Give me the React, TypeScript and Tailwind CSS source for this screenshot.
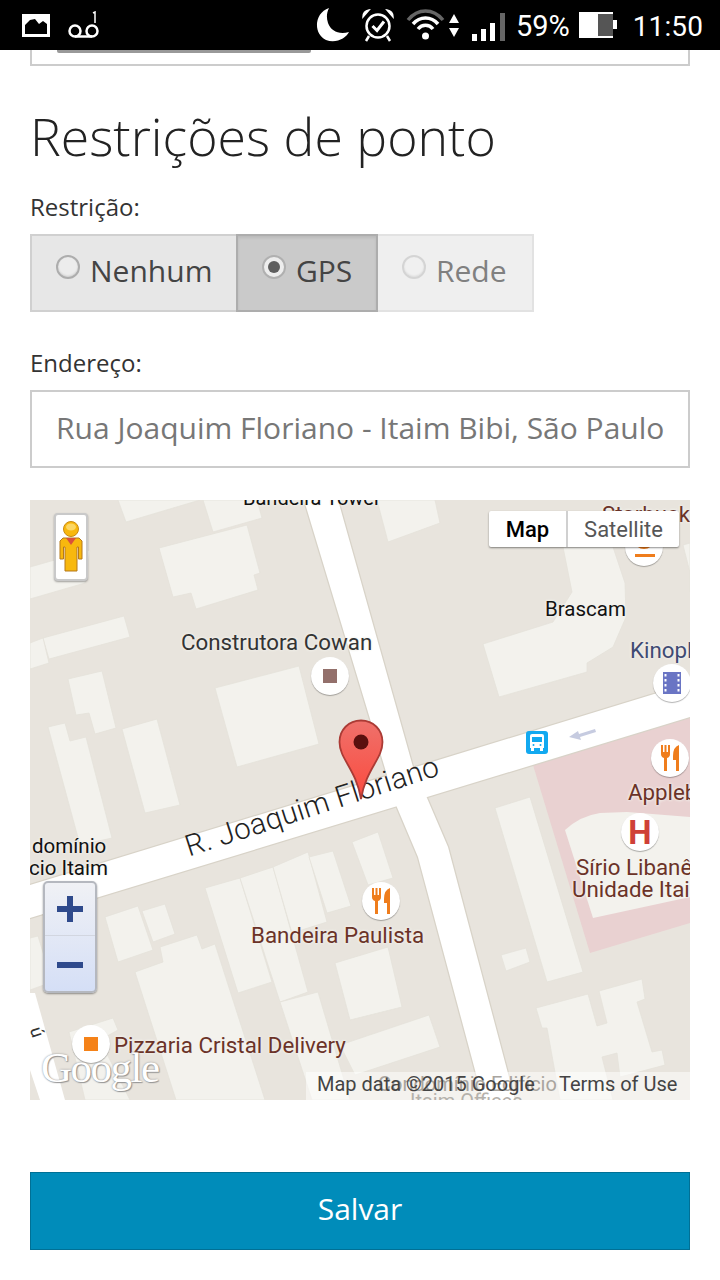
import { ReactNode } from "react";

const buildings: string[] = [
  "88,0 170,0 96,22",
  "173,0 227,0 232,18 183,32",
  "129,48 217,25 230,73 224,75 228,90 166,109 161,93 143,97",
  "0,67 60,50 55,83 0,99",
  "13,138 94,116 100,137 19,159",
  "0,143 13,138 19,163 0,169",
  "38,179 72,171 86,228 65,234 59,213 46,215",
  "18,227 35,223 40,241 56,237 82,338 50,345",
  "92,229 127,219 150,305 115,313",
  "185,188 269,166 289,244 207,267",
  "347,0 405,0 410,23 358,42",
  "453,144 523,122 542,92 533,47 583,47 595,83 596,117 583,147 557,163 557,172 469,197",
  "653,45 660,43 660,92 665,92",
  "75,417 108,406 123,450 88,462",
  "112,411 135,404 145,434 123,442",
  "105,472 133,462 130,447 167,435 172,449 185,444 235,600 146,600",
  "175,388 210,378 242,482 208,493",
  "210,378 243,367 278,492 250,502",
  "243,367 278,352 297,422 262,433",
  "279,357 303,351 321,406 297,413",
  "250,502 288,492 320,600 282,600",
  "39,532 83,518 88,530 70,540 100,600 55,600",
  "305,463 358,447 372,507 320,520",
  "322,342 348,332 363,378 338,385",
  "310,545 399,515 410,547 325,575",
  "465,308 500,297 553,472 517,482",
  "471,455 496,448 500,462 476,471",
  "506,508 558,494 567,526 577,523 569,491 612,479 615,499 607,502 622,552 632,550 635,565 590,577 587,553 572,557 583,600 530,600 517,528 512,528",
  "0,438 8,436 22,482 0,490",
];

const crossRoad = "M274,0 L308,0 L383,267 L397,298 L418,347 L485,600 L453,600 L388,357 L366,305 Z";
const mainRoad = "M0,385 L660,183 L660,217 L0,418 Z";

const MapBase = (): ReactNode => (
  <svg className="absolute inset-0" width="660" height="600" viewBox="0 0 660 600">
    <rect width="660" height="600" fill="#e8e4dd" />
    <polygon points="503,265 660,217 660,423 560,453" fill="#e9d1d1" />
    <path d="M535,330 Q550,316 570,313 L597,312 L660,317 L660,397 L563,418 Z" fill="#f3f2ed" />
    {buildings.map((p, i) => (
      <polygon key={i} points={p} fill="#f3f2ed" stroke="#e4e1d9" strokeWidth="0.75" />
    ))}
    {/* roads, casing first and then the fill so the junction stays clean */}
    <path d={crossRoad} fill="#d8d3c8" stroke="#d8d3c8" strokeWidth="2.5" />
    <path d={mainRoad} fill="#d8d3c8" stroke="#d8d3c8" strokeWidth="2.5" />
    <path d={crossRoad} fill="#ffffff" />
    <path d={mainRoad} fill="#ffffff" />
    <polygon points="0,493 5,493 35,600 10,600 0,570" fill="#ffffff" />
    {/* bus arrow */}
    <path d="M565,229 L549,234 L548,231 L539,237 L551,240 L550,237 L566,232 Z" fill="#c6cbe0" />
  </svg>
);

const Poi = ({ x, y, children }: { x: number; y: number; children: ReactNode }) => (
  <div
    className="absolute w-[38px] h-[38px] rounded-full bg-white flex items-center justify-center shadow-[0_1px_1px_rgba(0,0,0,0.3)]"
    style={{ left: x - 19, top: y - 19 }}
  >
    {children}
  </div>
);

const Fork = () => (
  <svg width="20" height="26" viewBox="0 0 20 26">
    <path d="M1,0 L3,0 L3,7 L4.5,7 L4.5,0 L6.5,0 L6.5,7 L8,7 L8,0 L10,0 L10,9 Q10,12 7,13 L7,26 L4,26 L4,13 Q1,12 1,9 Z" fill="#ef7d1c" />
    <path d="M13,11 Q13,2 19,0 L19,26 L16,26 L16,15 L13,15 Z" fill="#ef7d1c" />
  </svg>
);

const Label = ({ x, y, color, size = 22.3, children }: { x: number; y: number; color: string; size?: number; children: ReactNode }) => (
  <span
    className="absolute whitespace-nowrap leading-[24px] font-['Roboto',sans-serif] [text-shadow:0_0_3px_#f3f2ed,0_0_3px_#f3f2ed]"
    style={{ left: x, top: y - 12, color, fontSize: size }}
  >
    {children}
  </span>
);

const GoogleMap = (): ReactNode => (
  <div className="relative w-[660px] h-[600px] overflow-hidden">
    <MapBase />

    <Label x={213} y={-2} color="#111" size={20}>Bandeira Tower</Label>
    <Label x={151} y={142} color="#333">Construtora Cowan</Label>
    <Label x={515} y={109} color="#111" size={20.5}>Brascam</Label>
    <Label x={600} y={150} color="#3f4a73">Kinoplex</Label>
    <Label x={572} y={14} color="#6b3328">Starbucks</Label>
    <Label x={598} y={292} color="#6b3328">Applebee's</Label>
    <Label x={546} y={367} color="#6b3328">Sírio Libanês</Label>
    <Label x={542} y={389} color="#6b3328">Unidade Itaim</Label>
    <Label x={2} y={346} color="#111" size={20.5}>domínio</Label>
    <Label x={-6} y={368} color="#111" size={20.5}>ício Itaim</Label>
    <Label x={221} y={435} color="#6b3328">Bandeira Paulista</Label>
    <Label x={84} y={545} color="#6b3328">Pizzaria Cristal Delivery</Label>

    <span className="absolute left-[156px] top-[331px] whitespace-nowrap origin-left rotate-[-18deg] text-[29.5px] leading-[32px] font-light tracking-[0.3px] text-[#222] font-['Roboto',sans-serif]">
      R. Joaquim Floriano
    </span>
    <span className="absolute left-[2px] top-[522px] rotate-[72deg] text-[18px] leading-[20px] text-[#333] font-['Roboto',sans-serif]">ú</span>

    <Poi x={300} y={176}><div className="w-[14px] h-[14px] bg-[#93706b]" /></Poi>
    <Poi x={642} y={183}>
      <svg width="18" height="22" viewBox="0 0 18 22">
        <rect width="18" height="22" fill="#6a75c4" />
        <path d="M1.5,2 h2 v2.5 h-2 z M1.5,7 h2 v2.5 h-2 z M1.5,12 h2 v2.5 h-2 z M1.5,17 h2 v2.5 h-2 z M14.5,2 h2 v2.5 h-2 z M14.5,7 h2 v2.5 h-2 z M14.5,12 h2 v2.5 h-2 z M14.5,17 h2 v2.5 h-2 z" fill="#fff" />
      </svg>
    </Poi>
    <Poi x={640} y={258}><Fork /></Poi>
    <Poi x={351} y={401}><Fork /></Poi>
    <Poi x={610} y={332}><span className="text-[#cf4037] text-[33px] leading-none font-bold font-['Roboto',sans-serif]">H</span></Poi>
    <Poi x={61} y={544}><div className="w-[14px] h-[14px] bg-[#f58218]" /></Poi>
    <Poi x={614} y={47}>
      <svg width="22" height="26" viewBox="0 0 22 26"><path d="M3,2 H19 V8 Q19,15 11,15 Q3,15 3,8 Z" fill="#ef7d1c" /><rect x="2" y="20" width="20" height="3" fill="#ef7d1c" /></svg>
    </Poi>

    {/* bus stop */}
    <div className="absolute left-[496px] top-[231px] w-[22px] h-[23px] rounded-[3px] bg-[#12a9f0] flex items-center justify-center">
      <svg width="14" height="17" viewBox="0 0 14 17">
        <path d="M2,0 H12 Q14,0 14,2 V14 H0 V2 Q0,0 2,0 Z" fill="#fff" />
        <rect x="2" y="3" width="10" height="5" fill="#12a9f0" />
        <rect x="1" y="14" width="3" height="3" fill="#fff" />
        <rect x="10" y="14" width="3" height="3" fill="#fff" />
        <circle cx="3.5" cy="11" r="1" fill="#12a9f0" />
        <circle cx="10.5" cy="11" r="1" fill="#12a9f0" />
      </svg>
    </div>

    {/* pin */}
    <svg className="absolute left-[308px] top-[219px]" width="46" height="82" viewBox="0 0 46 82">
      <defs>
        <linearGradient id="pinFill" x1="0" y1="0" x2="0" y2="1">
          <stop offset="0" stopColor="#ef716b" />
          <stop offset="1" stopColor="#fb4a3e" />
        </linearGradient>
      </defs>
      <path d="M23,1.5 C10.5,1.5 1.5,11 1.5,23 C1.5,40 18,50 23,80 C28,50 44.5,40 44.5,23 C44.5,11 35.5,1.5 23,1.5 Z" fill="url(#pinFill)" stroke="#ab3b35" strokeWidth="1.8" />
      <circle cx="23" cy="23" r="7.5" fill="#5a100e" />
    </svg>

    {/* pegman */}
    <div className="absolute left-[24px] top-[13px] w-[34px] h-[68px] bg-white rounded-[4px] border-2 border-[#c9c9c9] shadow-[0_1px_2px_rgba(0,0,0,0.35)] flex items-center justify-center">
      <svg width="24" height="52" viewBox="0 0 24 52">
        <circle cx="12" cy="8" r="7.5" fill="#f8b80e" stroke="#c98a12" strokeWidth="1" />
        <ellipse cx="12" cy="6" rx="5" ry="3.5" fill="#fcd765" />
        <path d="M4,17 H20 L23,20 V38 H19.5 V26 L18,26 V50 H6 V26 L4.5,26 V38 H1 V20 Z" fill="#f8b80e" stroke="#b5791a" strokeWidth="1" />
        <path d="M7,17 H17 L12,24 Z" fill="#d9503c" />
      </svg>
    </div>

    {/* zoom */}
    <div className="absolute left-[13px] top-[381px] w-[54px] h-[112px] rounded-[5px] border-2 border-[#b5b8bf] shadow-[0_1px_2px_rgba(0,0,0,0.4)] flex flex-col bg-gradient-to-b from-[#f0f1f5] to-[#d5dff6]">
      <div className="flex-1 flex items-center justify-center border-b border-[#d2d6e0]">
        <svg width="28" height="28" viewBox="0 0 28 28"><path d="M11,1 H17 V11 H27 V17 H17 V27 H11 V17 H1 V11 H11 Z" fill="#2f4a8c" /></svg>
      </div>
      <div className="flex-1 pt-[3px] flex items-center justify-center">
        <svg width="28" height="8" viewBox="0 0 28 8"><rect x="1" y="1" width="26" height="6" fill="#2f4a8c" /></svg>
      </div>
    </div>

    {/* map type */}
    <div className="absolute left-[459px] top-[11px] w-[190px] h-[36px] flex rounded-[2px] bg-white shadow-[0_1px_2px_rgba(0,0,0,0.45)] font-['Roboto',sans-serif] text-[22px]">
      <div className="w-[77px] flex items-center justify-center font-medium text-black">Map</div>
      <div className="flex-1 flex items-center justify-center border-l-2 border-[#d0d0d0] text-[#565656]">Satellite</div>
    </div>

    <span className="absolute left-[11px] top-[543px] font-['Liberation_Serif',serif] text-[43px] leading-[50px] tracking-[-1.5px] text-white [text-shadow:0_0_2px_#8a8a8a,1px_1px_1px_#999]">
      Google
    </span>

    {/* attribution */}
    <div className="absolute left-[276px] right-0 bottom-0 h-[28px] bg-white/50 text-[#444] text-[20px] leading-[24px] font-['Roboto',sans-serif]">
      <span className="absolute left-[72px] top-0 whitespace-nowrap text-[#a9a59f]">Condomínio Edifício</span>
      <span className="absolute left-[104px] top-[17px] whitespace-nowrap text-[#b5b1ab]">Itaim Offices</span>
      <span className="absolute left-[11px] top-0 whitespace-nowrap">Map data ©2015 Google</span>
      <span className="absolute left-[253px] top-0 whitespace-nowrap">Terms of Use</span>
    </div>
  </div>
);

const StatusBar = (): ReactNode => (
  <div className="h-[50px] bg-black flex items-center justify-between pl-[22px] pr-[17px] text-white font-['Roboto',sans-serif]">
    <div className="flex items-center gap-[18px]">
      <svg width="28" height="23" viewBox="0 0 28 23">
        <path d="M0,0 H28 V23 H0 Z M3,20 H25 V10 L21,7 L17,10 L13,5 L8,6 L3,11 Z" fill="#fff" fillRule="evenodd" />
      </svg>
      <svg width="32" height="28" viewBox="0 0 32 28" fill="none" stroke="#fff" strokeWidth="2.5">
        <circle cx="7" cy="20" r="5.5" />
        <circle cx="24" cy="20" r="5.5" />
        <path d="M7,25.5 H24" />
        <path d="M25,2 L27,1 V12" strokeWidth="1.5" />
      </svg>
    </div>
    <div className="flex items-center">
      <svg width="34" height="34" viewBox="0 0 34 34">
        <path d="M13,0 C-2,5 -3,26 10,32 C20,36 30,30 33,24 C23,27 15,23 12,15 C10,9 11,4 13,0 Z" fill="#fff" />
      </svg>
      <svg className="ml-[11px]" width="34" height="34" viewBox="0 0 34 34" fill="none" stroke="#fff" strokeWidth="2.5">
        <circle cx="17" cy="18" r="11.5" />
        <path d="M11.5,18 L16,22.5 L23,13.5" strokeWidth="3" />
        <path d="M2,9 Q2,3 8,2 Z M32,9 Q32,3 26,2 Z" fill="#fff" strokeWidth="1.5" />
        <path d="M8,28 L5,33 M26,28 L29,33" />
      </svg>
      <svg className="ml-[11px]" width="39" height="32" viewBox="0 0 39 32" fill="none" strokeWidth="3.5">
        <path d="M2,11 C12,-1 27,-1 37,11" stroke="#666" />
        <path d="M7,15 C14,7 25,7 32,15" stroke="#fff" />
        <path d="M12,20 C16,15 23,15 27,20" stroke="#fff" />
        <circle cx="19.5" cy="27" r="3.5" fill="#fff" stroke="none" />
      </svg>
      <svg className="ml-[3px]" width="12" height="23" viewBox="0 0 12 23">
        <path d="M6,0 L11,9 H1 Z M1,14 H11 L6,23 Z" fill="#fff" />
      </svg>
      <svg className="ml-[12px] mt-[4px]" width="33" height="28" viewBox="0 0 33 28">
        <rect x="0" y="21" width="5" height="7" fill="#fff" />
        <rect x="9" y="16" width="5" height="12" fill="#fff" />
        <rect x="18" y="10" width="5" height="18" fill="#fff" />
        <rect x="28" y="0" width="5" height="28" fill="#666" />
      </svg>
      <span className="ml-[11px] mt-[3px] text-[29px] leading-none">59%</span>
      <svg className="ml-[9px]" width="38" height="26" viewBox="0 0 38 26">
        <rect width="34" height="26" fill="#fff" />
        <rect x="19" y="2" width="15" height="22" fill="#555" />
        <rect x="34" y="8" width="4" height="9" fill="#fff" />
      </svg>
      <span className="ml-[16px] mt-[3px] text-[28px] leading-none tracking-[0.1px]">11:50</span>
    </div>
  </div>
);

const RadioDot = ({ state }: { state: "off" | "on" | "disabled" }) => (
  <span
    className={
      state === "disabled"
        ? "mb-[8px] w-[24px] h-[24px] rounded-full border-2 border-[#d4d4d4] bg-[#f0f0f0] shadow-[inset_0_-1px_2px_rgba(0,0,0,0.08)]"
        : state === "on"
          ? "mb-[8px] w-[24px] h-[24px] rounded-full border-2 border-[#b0b0b0] bg-[#ededed] flex items-center justify-center"
          : "mb-[8px] w-[24px] h-[24px] rounded-full border-2 border-[#adadad] bg-[#ececec] shadow-[inset_0_-1px_2px_rgba(0,0,0,0.12)]"
    }
  >
    {state === "on" && <span className="block w-[12px] h-[12px] rounded-full bg-[#5e5e5e]" />}
  </span>
);

export default function App() {
  return (
    <div className="w-[720px] h-[1280px] bg-white overflow-hidden font-['Open_Sans',sans-serif] text-[#333]">
      <StatusBar />
      <div className="px-[30px]">
        <div className="h-[16px] border-x-2 border-b-2 border-[#ccc] pl-[25px]">
          <div className="w-[254px] h-[3px] bg-[#999] rounded-b-[2px]" />
        </div>

        <h1 className="mt-[36px] text-[51.8px] leading-[68px] font-light text-[#222]">Restrições de ponto</h1>

        <label className="block mt-[21px] text-[24px] leading-[32px]">Restrição:</label>
        <div className="mt-[11px] flex w-[504px] h-[78px] text-[30px]">
          <div className="w-[206px] pb-[5px] bg-[#e7e7e7] border-2 border-r-0 border-[#d0d0d0] flex items-center pl-[24px] gap-[10px]">
            <RadioDot state="off" />
            <span className="text-[#444]">Nenhum</span>
          </div>
          <div className="w-[142px] pb-[5px] bg-[#cacaca] border-2 border-[#adadad] shadow-[inset_0_2px_3px_rgba(0,0,0,0.08)] flex items-center pl-[24px] gap-[10px]">
            <RadioDot state="on" />
            <span className="text-[#444]">GPS</span>
          </div>
          <div className="flex-1 pb-[5px] bg-[#efefef] border-2 border-l-0 border-[#e2e2e2] flex items-center pl-[24px] gap-[10px]">
            <RadioDot state="disabled" />
            <span className="text-[#808080]">Rede</span>
          </div>
        </div>

        <label className="block mt-[35px] text-[24px] leading-[32px]">Endereço:</label>
        <div className="mt-[11px] h-[78px] pb-[3px] border-2 border-[#ccc] flex items-center pl-[24px] text-[30px] text-[#777] whitespace-nowrap overflow-hidden">
          Rua Joaquim Floriano - Itaim Bibi, São Paulo
        </div>

        <div className="mt-[32px]">
          <GoogleMap />
        </div>

        <button className="block mt-[72px] w-[660px] h-[78px] pb-[6px] bg-[#008cba] border border-[#007095] text-white text-[30px]">
          Salvar
        </button>
      </div>
    </div>
  );
}
